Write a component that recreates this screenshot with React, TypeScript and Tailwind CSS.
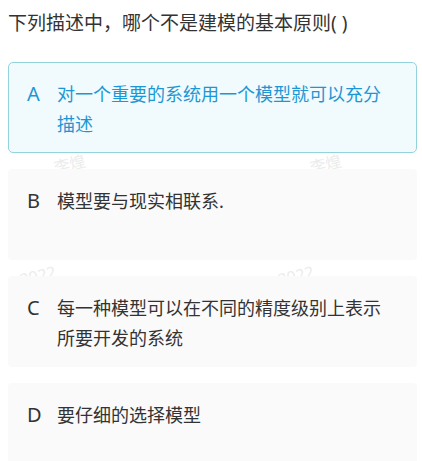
import React from "react";

const options = [
  { key: "A", text: "对一个重要的系统用一个模型就可以充分描述", active: true },
  { key: "B", text: "模型要与现实相联系.", active: false },
  { key: "C", text: "每一种模型可以在不同的精度级别上表示所要开发的系统", active: false },
  { key: "D", text: "要仔细的选择模型", active: false },
];

function Watermark({ x, y, text }: { x: number; y: number; text: string }) {
  return (
    <div
      className="absolute whitespace-nowrap text-[16px] leading-none text-[#ececec] -rotate-[14deg] origin-left"
      style={{ left: x, top: y }}
    >
      {text}
    </div>
  );
}

export default function App() {
  return (
    <div className="relative w-[422px] h-[461px] overflow-hidden bg-white font-['Noto_Sans','Noto_Sans_CJK_SC',sans-serif]">
      <div className="absolute inset-0">
        <Watermark x={54} y={160} text="李煌" />
        <Watermark x={310} y={160} text="李煌" />
        <Watermark x={20} y={272} text="2022" />
        <Watermark x={278} y={272} text="2022" />
      </div>
      <div className="relative pl-2 pr-[5px] pt-2">
        <div className="text-[19px] leading-[30px] text-[#333333]">下列描述中，哪个不是建模的基本原则( )</div>
        <div className="mt-6 flex flex-col gap-4">
          {options.map((o) =>
            o.active ? (
              <div
                key={o.key}
                className="flex min-h-[91px] rounded-[5px] border border-[#93d3de] bg-[#f1fafd] pl-[18px] pr-[34px] pt-[16px] pb-[13px] text-[18px] leading-[30px] text-[#1d97d4]"
              >
                <div className="w-[30px] shrink-0 text-[20px]">{o.key}</div>
                <div className="flex-1">{o.text}</div>
              </div>
            ) : (
              <div
                key={o.key}
                className="flex min-h-[91px] rounded-[4px] bg-[#fafafa] pl-[19px] pr-[35px] pt-[17px] pb-[14px] text-[18px] leading-[30px] text-[#333333]"
              >
                <div className="w-[30px] shrink-0 text-[20px]">{o.key}</div>
                <div className="flex-1">{o.text}</div>
              </div>
            )
          )}
        </div>
      </div>
    </div>
  );
}
